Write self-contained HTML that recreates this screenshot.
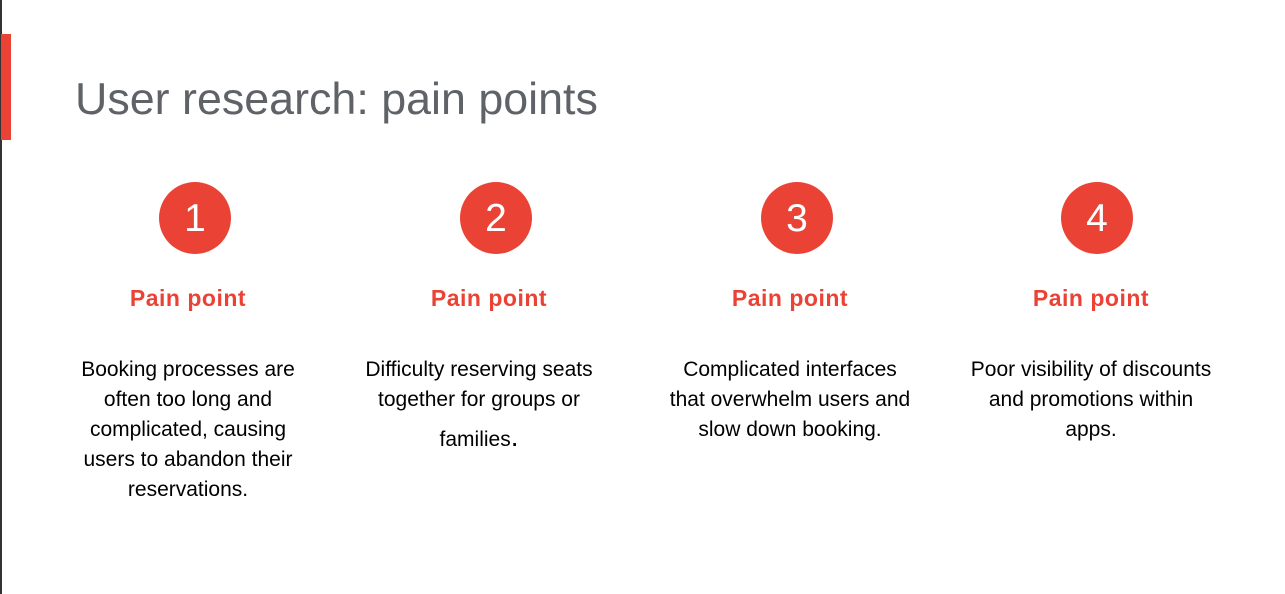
<!DOCTYPE html>
<html><head><style>
body{margin:0;width:1285px;height:594px;background:#fff;position:relative;overflow:hidden;font-family:"Liberation Sans",sans-serif}
.ln{position:absolute;left:0;top:0;width:2px;height:594px;background:#333}
.bar{position:absolute;left:1px;top:34px;width:10px;height:106px;background:#ea4335}
h1{position:absolute;left:75px;top:74px;margin:0;font-weight:normal;font-size:44.8px;color:#5f6368;letter-spacing:0}
.c{position:absolute;width:72px;height:72px;border-radius:50%;background:#ea4335;color:#fff;font-size:39px;line-height:74px;text-align:center;top:182px}
.t{position:absolute;width:300px;text-align:center;top:285px;font-size:23px;font-weight:bold;color:#ea4335;letter-spacing:0.5px}
.p{position:absolute;width:320px;text-align:center;top:355px;font-size:21px;line-height:30px;color:#000}
</style></head><body>
<div class="ln"></div><div class="bar"></div>
<h1>User research: pain points</h1>
<div class="c" style="left:159px">1</div>
<div class="c" style="left:460px">2</div>
<div class="c" style="left:761px">3</div>
<div class="c" style="left:1061px">4</div>
<div class="t" style="left:38px">Pain point</div>
<div class="t" style="left:339px">Pain point</div>
<div class="t" style="left:640px">Pain point</div>
<div class="t" style="left:941px">Pain point</div>
<div class="p" style="left:28px">Booking processes are<br>often too long and<br>complicated, causing<br>users to abandon their<br>reservations.</div>
<div class="p" style="left:319px">Difficulty reserving seats<br>together for groups or<br><span style="line-height:44px">families<span style="font-size:28px">.</span></span></div>
<div class="p" style="left:630px">Complicated interfaces<br>that overwhelm users and<br>slow down booking.</div>
<div class="p" style="left:931px">Poor visibility of discounts<br>and promotions within<br>apps.</div>
</body></html>
